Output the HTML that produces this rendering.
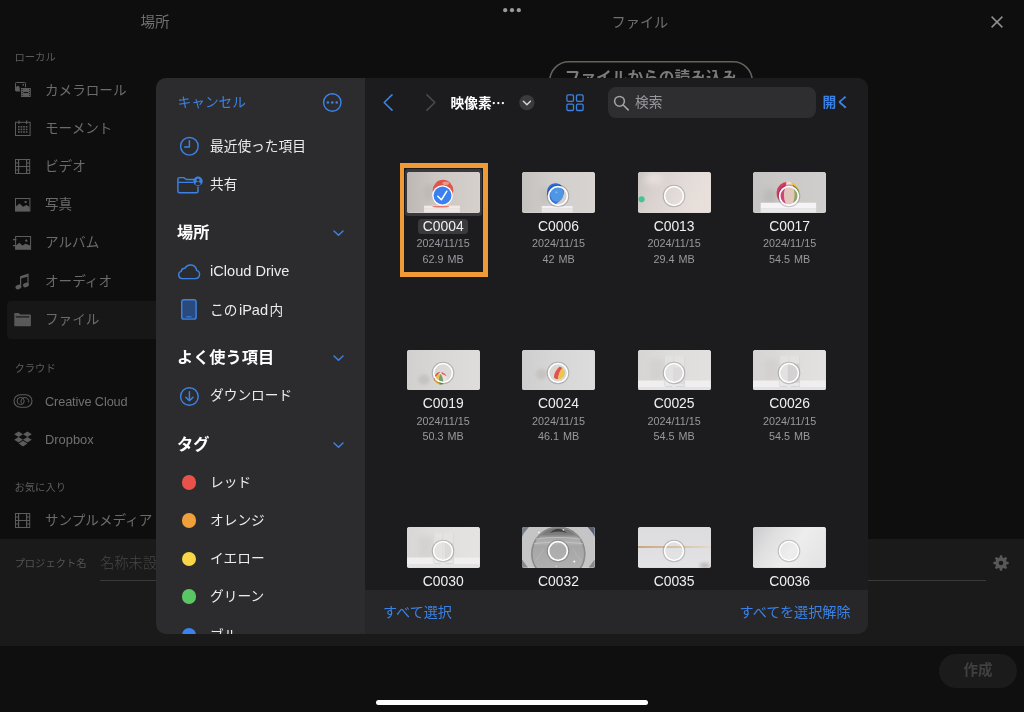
<!DOCTYPE html>
<html lang="ja">
<head>
<meta charset="utf-8">
<title>ファイル</title>
<style>
*{box-sizing:border-box;margin:0;padding:0}
html,body{width:1024px;height:712px;overflow:hidden;background:#0e0e0e}
body{position:relative;font-family:"Liberation Sans","Noto Sans CJK JP",sans-serif;color:#fff}
.abs{position:absolute}
.t{position:absolute;white-space:nowrap;line-height:1}
svg{position:absolute;overflow:visible}
#bg{position:absolute;left:0;top:0;width:1024px;height:712px;background:#0e0e0e;will-change:transform}
.hd{color:#6f6f6f;font-size:14.6px}
.sec{color:#5c5c5c;font-size:10.3px}
.it{color:#6b6b6b;font-size:13.6px}
#selrow{left:7px;top:300.5px;width:200px;height:38.5px;background:#171717;border-radius:4px}
#proj{left:0;top:539px;width:1024px;height:107px;background:#1a1a1a}
#foot{left:0;top:646px;width:1024px;height:66px;background:#0f0f0f}
#create{left:939px;top:653.5px;width:78px;height:34px;border-radius:17px;background:#1b1b1b;color:#404040;font-size:14.5px;font-weight:700;text-align:center;line-height:32px}
#home{left:376px;top:700px;width:272px;height:5px;border-radius:3px;background:#fff}
#imp{left:549px;top:61px;width:204px;height:40px;color:#7b7b7b;font-size:15.7px;font-weight:700;text-align:center;line-height:34px}
#modal{will-change:transform;left:156px;top:78px;width:712px;height:555.5px;border-radius:10px;overflow:hidden;background:#1c1c1e}
#side{left:0;top:0;width:209px;height:556px;background:#2c2c2e}
#main{left:209px;top:0;width:503px;height:556px;background:#1c1c1e}
.blue{color:#3b82e4}
.sl{font-size:13.7px;color:#ececec}
.sl b{font-weight:400;font-size:14.6px}
.sh{font-size:16.2px;font-weight:700;color:#fff}
.dot{position:absolute;width:14.6px;height:14.6px;border-radius:50%;left:25.9px}
#btm{left:0;top:511.5px;width:503px;height:44.5px;background:#272729}
#search{left:242.5px;top:9px;width:208px;height:31px;border-radius:8px;background:#2e2e31}
.th{position:absolute;width:73px;height:40.5px;border-radius:2.5px;overflow:hidden;background:#d9d6d3}
.th svg{left:0;top:0}
.nm{position:absolute;width:116px;text-align:center;font-size:13.9px;color:#f0f0f0;line-height:1;white-space:nowrap}
.mt{position:absolute;width:116px;text-align:center;font-size:10.8px;word-spacing:1px;color:#98989e;line-height:1;white-space:nowrap}
.ring{position:absolute;width:20.6px;height:20.6px;border-radius:50%;border:1.9px solid #fff;background:rgba(255,255,255,.13);box-shadow:0 0 1.5px rgba(0,0,0,.45),inset 0 0 1.5px rgba(0,0,0,.3)}
</style>
</head>
<body>
<div id="bg">
  <div class="t hd" style="left:140.5px;top:15px">場所</div>
  <div class="t hd" style="left:611.5px;top:15px;font-size:14.2px">ファイル</div>
  <svg style="left:502px;top:6px" width="20" height="8" viewBox="0 0 20 8"><circle cx="3.2" cy="4.2" r="2.1" fill="#9a9a9a"/><circle cx="10" cy="4.2" r="2.1" fill="#9a9a9a"/><circle cx="16.8" cy="4.2" r="2.1" fill="#9a9a9a"/></svg>
  <svg style="left:991px;top:16px" width="12" height="12" viewBox="0 0 12 12"><path d="M0.6 0.6L11.4 11.4M11.4 0.6L0.6 11.4" stroke="#8f8f8f" stroke-width="1.5" fill="none"/></svg>
  <svg style="left:549px;top:61px" width="204" height="40" viewBox="0 0 204 40"><rect x="0.75" y="0.75" width="202.5" height="38.5" rx="19.25" fill="none" stroke="#63635d" stroke-width="1.5"/></svg>
  <div class="abs" id="imp">ファイルからの読み込み</div>

  <div class="t sec" style="left:14.5px;top:53px">ローカル</div>
  <div class="abs" id="selrow"></div>

  <!-- camera roll -->
  <svg style="left:15px;top:82px" width="16" height="15" viewBox="0 0 16 15">
    <rect x="0.5" y="0.5" width="10" height="8.5" rx="0.8" fill="none" stroke="#5c5c5c" stroke-width="1"/>
    <path d="M0.5 9V5.5L2.8 3.6L4.8 5.6V9Z" fill="#5c5c5c"/><rect x="7.6" y="2" width="1.4" height="1.6" fill="#5c5c5c"/>
    <rect x="5.2" y="5.2" width="11.3" height="10.3" fill="#0e0e0e"/>
    <rect x="6" y="6" width="9.8" height="9" fill="#5c5c5c"/>
    <rect x="8.6" y="10" width="4.6" height="1" fill="#0e0e0e"/>
    <g fill="#0e0e0e" opacity=".75"><rect x="6.8" y="7" width="1" height="1"/><rect x="6.8" y="9" width="1" height="1"/><rect x="6.8" y="11" width="1" height="1"/><rect x="6.8" y="13" width="1" height="1"/><rect x="14" y="7" width="1" height="1"/><rect x="14" y="9" width="1" height="1"/><rect x="14" y="11" width="1" height="1"/><rect x="14" y="13" width="1" height="1"/></g>
  </svg>
  <div class="t it" style="left:45px;top:83.5px">カメラロール</div>

  <!-- calendar -->
  <svg style="left:15px;top:120px" width="16" height="16" viewBox="0 0 16 16">
    <rect x="0.5" y="2.3" width="14.6" height="13.2" fill="none" stroke="#5c5c5c" stroke-width="1"/>
    <path d="M4 0.5V4M11.6 0.5V4" stroke="#5c5c5c" stroke-width="1.2"/>
    <g fill="#5c5c5c"><rect x="3" y="6" width="1.6" height="1.6"/><rect x="5.6" y="6" width="1.6" height="1.6"/><rect x="8.2" y="6" width="1.6" height="1.6"/><rect x="10.8" y="6" width="1.6" height="1.6"/>
    <rect x="3" y="8.6" width="1.6" height="1.6"/><rect x="5.6" y="8.6" width="1.6" height="1.6"/><rect x="8.2" y="8.6" width="1.6" height="1.6"/><rect x="10.8" y="8.6" width="1.6" height="1.6"/>
    <rect x="3" y="11.2" width="1.6" height="1.6"/><rect x="5.6" y="11.2" width="1.6" height="1.6"/><rect x="8.2" y="11.2" width="1.6" height="1.6"/><rect x="10.8" y="11.2" width="1.6" height="1.6"/></g>
  </svg>
  <div class="t it" style="left:45px;top:121.5px">モーメント</div>

  <!-- film -->
  <svg style="left:15px;top:159px" width="16" height="15" viewBox="0 0 16 15">
    <rect x="0.5" y="0.5" width="14.2" height="14" fill="none" stroke="#5c5c5c" stroke-width="1"/>
    <path d="M3.6 0.5V14.5M11.6 0.5V14.5M3.6 7.5H11.6M0.5 4H3.6M0.5 7.5H3.6M0.5 11H3.6M11.6 4H14.7M11.6 7.5H14.7M11.6 11H14.7" stroke="#5c5c5c" stroke-width="1.15" fill="none"/>
  </svg>
  <div class="t it" style="left:45px;top:159.5px">ビデオ</div>

  <!-- photo -->
  <svg style="left:15px;top:198px" width="16" height="14" viewBox="0 0 16 14">
    <rect x="0.5" y="0.5" width="14.4" height="12.6" fill="none" stroke="#5c5c5c" stroke-width="1"/>
    <path d="M0.8 13V8.6L4.6 5.4L8 8.8L11.4 7L14.6 9V13Z" fill="#5c5c5c"/><rect x="9.6" y="3" width="2" height="2" rx="0.6" fill="#5c5c5c"/>
  </svg>
  <div class="t it" style="left:45px;top:197.5px">写真</div>

  <!-- album -->
  <svg style="left:13px;top:236px" width="18" height="14" viewBox="0 0 18 14">
    <rect x="2.6" y="0.5" width="15" height="12.8" fill="none" stroke="#5c5c5c" stroke-width="1"/>
    <path d="M0 3.6H3.4M0 9.6H3.4" stroke="#5c5c5c" stroke-width="1.1"/>
    <path d="M2.9 13V9.6L6.4 6.8L9.4 9.4L12.4 7.8L17.3 9.4V13Z" fill="#5c5c5c"/><rect x="12.2" y="3.6" width="2.2" height="2.2" rx="0.8" fill="#5c5c5c"/>
  </svg>
  <div class="t it" style="left:45px;top:236px">アルバム</div>

  <!-- audio -->
  <svg style="left:14.5px;top:272.5px" width="15" height="17" viewBox="0 0 15 17">
    <path d="M5 3.2L13.6 0.6V12.2H12.4V3.8L6.2 5.6V14H5Z" fill="#5c5c5c"/>
    <ellipse cx="3.4" cy="14" rx="3" ry="2.2" transform="rotate(-20 3.4 14)" fill="#5c5c5c"/>
    <ellipse cx="10.9" cy="12" rx="3" ry="2.2" transform="rotate(-20 10.9 12)" fill="#5c5c5c"/>
  </svg>
  <div class="t it" style="left:45px;top:274.5px">オーディオ</div>

  <!-- folder -->
  <svg style="left:14px;top:313px" width="17" height="14" viewBox="0 0 17 14">
    <path d="M0.3 0.6Q0.3 0 0.9 0H4.6L6.4 1.6H16.3Q16.9 1.6 16.9 2.2V12.6Q16.9 13.2 16.3 13.2H0.9Q0.3 13.2 0.3 12.6Z" fill="#595959"/>
    <rect x="1.8" y="3.3" width="13.4" height="1.2" fill="#171717"/>
  </svg>
  <div class="t it" style="left:45px;top:312.5px">ファイル</div>

  <div class="t sec" style="left:14.5px;top:363.5px">クラウド</div>
  <!-- creative cloud -->
  <svg style="left:14px;top:394px" width="18" height="14" viewBox="0 0 18 14">
    <path d="M6.2 0.8H11.8A6.2 6.2 0 0 1 11.8 13.2H6.2A6.2 6.2 0 0 1 6.2 0.8Z" fill="none" stroke="#5c5c5c" stroke-width="1.1"/>
    <circle cx="6.6" cy="7" r="3.6" fill="none" stroke="#5c5c5c" stroke-width="1"/>
    <path d="M7.6 9.6A3.9 3.9 0 1 1 14.6 8.4" fill="none" stroke="#5c5c5c" stroke-width="1"/>
  </svg>
  <div class="t it" style="left:45px;top:395.5px;font-size:12.7px;letter-spacing:-0.1px;color:#707070">Creative Cloud</div>
  <!-- dropbox -->
  <svg style="left:14px;top:431px" width="18" height="16" viewBox="0 0 18 16">
    <g fill="#5c5c5c"><path d="M4.6 0.4L9 3.2L4.6 6L0.2 3.2Z"/><path d="M13.4 0.4L17.8 3.2L13.4 6L9 3.2Z"/><path d="M4.6 6L9 8.8L4.6 11.6L0.2 8.8Z"/><path d="M13.4 6L17.8 8.8L13.4 11.6L9 8.8Z"/><path d="M4.6 12.6L9 9.8L13.4 12.6L9 15.4Z"/></g>
  </svg>
  <div class="t it" style="left:45px;top:433.5px;font-size:12.9px;color:#707070">Dropbox</div>

  <div class="t sec" style="left:14.5px;top:483px">お気に入り</div>
  <svg style="left:15px;top:513px" width="16" height="15" viewBox="0 0 16 15">
    <rect x="0.5" y="0.5" width="14.2" height="14" fill="none" stroke="#5c5c5c" stroke-width="1"/>
    <path d="M3.6 0.5V14.5M11.6 0.5V14.5M3.6 7.5H11.6M0.5 4H3.6M0.5 7.5H3.6M0.5 11H3.6M11.6 4H14.7M11.6 7.5H14.7M11.6 11H14.7" stroke="#5c5c5c" stroke-width="1.15" fill="none"/>
  </svg>
  <div class="t it" style="left:45px;top:513.5px">サンプルメディア</div>

  <div class="abs" id="proj"></div>
  <div class="t sec" style="left:14.5px;top:559px;color:#545454">プロジェクト名</div>
  <div class="t" style="left:100px;top:556px;font-size:14.3px;font-weight:300;color:#464646">名称未設定</div>
  <div class="abs" style="left:100px;top:580px;width:886px;height:1px;background:#3a3a3a"></div>
  <!-- gear -->
  <svg style="left:993.4px;top:555.2px" width="16" height="16" viewBox="0 0 16 16">
    <g fill="#585858"><circle cx="8" cy="8" r="5.8"/>
    <g id="gt"><rect x="6.7" y="0.3" width="2.6" height="3.4" rx="0.7"/></g>
    <rect x="6.7" y="0.3" width="2.6" height="3.4" rx="0.7" transform="rotate(45 8 8)"/>
    <rect x="6.7" y="0.3" width="2.6" height="3.4" rx="0.7" transform="rotate(90 8 8)"/>
    <rect x="6.7" y="0.3" width="2.6" height="3.4" rx="0.7" transform="rotate(135 8 8)"/>
    <rect x="6.7" y="0.3" width="2.6" height="3.4" rx="0.7" transform="rotate(180 8 8)"/>
    <rect x="6.7" y="0.3" width="2.6" height="3.4" rx="0.7" transform="rotate(225 8 8)"/>
    <rect x="6.7" y="0.3" width="2.6" height="3.4" rx="0.7" transform="rotate(270 8 8)"/>
    <rect x="6.7" y="0.3" width="2.6" height="3.4" rx="0.7" transform="rotate(315 8 8)"/></g>
    <circle cx="8" cy="8" r="2.3" fill="#1a1a1a"/>
  </svg>
  <div class="abs" id="foot"></div>
  <div class="abs" id="create">作成</div>
  <div class="abs" id="home"></div>
</div>
<div class="abs" id="modal">
  <div class="abs" id="side">
    <div class="t blue" style="left:21.5px;top:17.5px;font-size:13.7px">キャンセル</div>
    <!-- ellipsis circle -->
    <svg style="left:166px;top:14px" width="21" height="21" viewBox="0 0 21 21">
      <circle cx="10.3" cy="10.5" r="8.7" fill="none" stroke="#3b82e4" stroke-width="1.45"/>
      <circle cx="5.9" cy="10.5" r="1.3" fill="#3b82e4"/><circle cx="10.3" cy="10.5" r="1.3" fill="#3b82e4"/><circle cx="14.7" cy="10.5" r="1.3" fill="#3b82e4"/>
    </svg>
    <!-- clock -->
    <svg style="left:22.5px;top:57.5px" width="21" height="21" viewBox="0 0 21 21">
      <circle cx="10.4" cy="10.3" r="8.8" fill="none" stroke="#3b82e4" stroke-width="1.45"/>
      <path d="M10.4 4.6V11H5.6" fill="none" stroke="#3b82e4" stroke-width="1.45" stroke-linecap="round" stroke-linejoin="round"/>
    </svg>
    <div class="t sl" style="left:54px;top:61.5px">最近使った項目</div>
    <!-- shared folder -->
    <svg style="left:20.5px;top:98px" width="27" height="18" viewBox="0 0 27 18">
      <path d="M0.9 3.2Q0.9 1.6 2.5 1.6H6.6Q7.4 1.6 7.9 2.2L8.6 3Q9 3.4 9.7 3.4H17" fill="none" stroke="#3b82e4" stroke-width="1.45"/>
      <path d="M0.9 3V15Q0.9 16.8 2.7 16.8H19.2Q21 16.8 21 15V10.4" fill="none" stroke="#3b82e4" stroke-width="1.45"/>
      <path d="M0.9 6.4H16.4" fill="none" stroke="#3b82e4" stroke-width="1.2"/>
      <circle cx="21" cy="5.2" r="4.7" fill="#3b82e4"/>
      <circle cx="21" cy="3.9" r="1.5" fill="#2c2c2e"/>
      <path d="M18.1 8.2Q18.4 6.1 21 6.1Q23.6 6.1 23.9 8.2Q22.6 9.3 21 9.3Q19.4 9.3 18.1 8.2Z" fill="#2c2c2e"/>
    </svg>
    <div class="t sl" style="left:54px;top:99.5px">共有</div>

    <div class="t sh" style="left:21px;top:145.5px">場所</div>
    <svg style="left:176.5px;top:151.5px" width="11" height="7" viewBox="0 0 11 7"><path d="M1 1L5.5 5.3L10 1" fill="none" stroke="#3b82e4" stroke-width="1.5" stroke-linecap="round" stroke-linejoin="round"/></svg>
    <!-- cloud -->
    <svg style="left:21px;top:184.5px" width="24" height="17" viewBox="0 0 24 17">
      <path d="M5.6 15.6H18.6A4.2 4.2 0 0 0 19.6 7.4A6.2 6.2 0 0 0 8 5.2A3.6 3.6 0 0 0 4.2 8.4A3.7 3.7 0 0 0 5.6 15.6Z" fill="none" stroke="#3b82e4" stroke-width="1.45" stroke-linejoin="round"/>
    </svg>
    <div class="t sl" style="left:54px;top:186px"><b>iCloud Drive</b></div>
    <!-- ipad -->
    <svg style="left:25px;top:221px" width="16" height="21" viewBox="0 0 16 21">
      <rect x="0.7" y="0.7" width="14.4" height="19.4" rx="2.2" fill="#2b4a7c" stroke="#3b82e4" stroke-width="1.45"/>
      <path d="M5.6 17.8H10.2" stroke="#3b82e4" stroke-width="1" stroke-linecap="round"/>
    </svg>
    <div class="t sl" style="left:54px;top:224.5px">この<b style="margin:0 1.5px">iPad</b>内</div>

    <div class="t sh" style="left:21px;top:270.5px">よく使う項目</div>
    <svg style="left:176.5px;top:276.5px" width="11" height="7" viewBox="0 0 11 7"><path d="M1 1L5.5 5.3L10 1" fill="none" stroke="#3b82e4" stroke-width="1.5" stroke-linecap="round" stroke-linejoin="round"/></svg>
    <!-- download -->
    <svg style="left:22.5px;top:307.5px" width="21" height="21" viewBox="0 0 21 21">
      <circle cx="10.4" cy="10.5" r="8.8" fill="none" stroke="#3b82e4" stroke-width="1.45"/>
      <path d="M10.4 5.6V14.6M6.8 11.2L10.4 14.8L14 11.2" fill="none" stroke="#3b82e4" stroke-width="1.45" stroke-linecap="round" stroke-linejoin="round"/>
    </svg>
    <div class="t sl" style="left:54px;top:311px">ダウンロード</div>

    <div class="t sh" style="left:21px;top:357.5px">タグ</div>
    <svg style="left:176.5px;top:363.5px" width="11" height="7" viewBox="0 0 11 7"><path d="M1 1L5.5 5.3L10 1" fill="none" stroke="#3b82e4" stroke-width="1.5" stroke-linecap="round" stroke-linejoin="round"/></svg>

    <div class="dot" style="top:397.4px;background:#e8524a"></div>
    <div class="t sl" style="left:54px;top:397.5px">レッド</div>
    <div class="dot" style="top:435.3px;background:#f0a03a"></div>
    <div class="t sl" style="left:54px;top:435.5px">オレンジ</div>
    <div class="dot" style="top:473.5px;background:#f8d648"></div>
    <div class="t sl" style="left:54px;top:474px">イエロー</div>
    <div class="dot" style="top:511.4px;background:#5ac764"></div>
    <div class="t sl" style="left:54px;top:512px">グリーン</div>
    <div class="dot" style="top:550.2px;background:#3b82f0"></div>
    <div class="t sl" style="left:54px;top:551px">ブルー</div>
  </div>
  <div class="abs" id="main">
    <!-- back / forward -->
    <svg style="left:18px;top:16px" width="10" height="17" viewBox="0 0 10 17"><path d="M9 0.9L1.2 8.5L9 16.1" fill="none" stroke="#3b82e4" stroke-width="1.6" stroke-linecap="round" stroke-linejoin="round"/></svg>
    <svg style="left:60.5px;top:16px" width="10" height="17" viewBox="0 0 10 17"><path d="M1 0.9L8.8 8.5L1 16.1" fill="none" stroke="#4a4a4c" stroke-width="1.6" stroke-linecap="round" stroke-linejoin="round"/></svg>
    <div class="t" style="left:85.5px;top:17.5px;font-size:13.7px;font-weight:700;color:#fff">映像素<span style="font-family:'Noto Sans CJK JP',sans-serif">…</span></div>
    <!-- dropdown -->
    <svg style="left:154px;top:17px" width="16" height="16" viewBox="0 0 16 16"><circle cx="7.9" cy="7.7" r="7.6" fill="#3a3a3c"/><path d="M4.4 6.2L7.9 9.7L11.4 6.2" fill="none" stroke="#d2d2d6" stroke-width="1.5" stroke-linecap="round" stroke-linejoin="round"/></svg>
    <!-- grid -->
    <svg style="left:201px;top:16px" width="18" height="18" viewBox="0 0 18 18">
      <g fill="none" stroke="#3b82e4" stroke-width="1.3"><rect x="0.9" y="0.9" width="6.6" height="6.4" rx="1.2"/><rect x="10.5" y="0.9" width="6.6" height="6.4" rx="1.2"/><rect x="0.9" y="10.1" width="6.6" height="6.4" rx="1.2"/><rect x="10.5" y="10.1" width="6.6" height="6.4" rx="1.2"/></g>
    </svg>
    <div class="abs" id="search"></div>
    <svg style="left:248px;top:17px" width="16" height="16" viewBox="0 0 16 16"><circle cx="6.5" cy="6.3" r="4.9" fill="none" stroke="#a2a2a8" stroke-width="1.5"/><path d="M10.2 10L15.2 14.9" stroke="#a2a2a8" stroke-width="1.6" stroke-linecap="round"/></svg>
    <div class="t" style="left:270px;top:17.5px;font-size:13.7px;color:#98989e">検索</div>
    <div class="t blue" style="left:457.5px;top:17.5px;font-size:13.7px;font-weight:700">開く</div>
    <div class="abs" style="left:34.7px;top:84.9px;width:88.1px;height:113.9px;background:#f09a37"></div>
    <div class="abs" style="left:39.4px;top:89.9px;width:78.4px;height:104px;background:#1c1c1e"></div>
    <div class="abs" style="left:39.8px;top:90.8px;width:77.6px;height:47px;border-radius:3px;background:#39393d"></div>
    <div class="abs" style="left:53.2px;top:141.2px;width:49.6px;height:15px;border-radius:3.5px;background:#3a3a3c"></div>
    <div class="th" style="left:41.9px;top:94.1px"><svg width="72.6" height="40.5" viewBox="0 0 73 41" preserveAspectRatio="none"><defs><linearGradient id="g1" x1="0" y1="0" x2="1" y2="0"><stop offset="0" stop-color="#beb8b4"/><stop offset="0.4" stop-color="#cdc7c3"/><stop offset="1" stop-color="#d5d0cc"/></linearGradient><filter id="bl1" x="-50%" y="-50%" width="200%" height="200%"><feGaussianBlur stdDeviation="2.2"/></filter><filter id="bl1b" x="-50%" y="-50%" width="200%" height="200%"><feGaussianBlur stdDeviation="0.45"/></filter></defs><rect width="73" height="41" fill="url(#g1)"/><ellipse cx="22" cy="21" rx="6" ry="9" fill="#b9b3af" opacity=".55" filter="url(#bl1)"/><rect x="17.2" y="34.1" width="36" height="2.7" fill="#f3e9e7"/><rect x="17.2" y="36.7" width="36" height="4.4" fill="#ebe7e5"/><ellipse cx="34" cy="35.1" rx="8.6" ry="0.8" fill="#dc5a50" opacity=".8"/><g filter="url(#bl1b)"><ellipse cx="36.2" cy="19" rx="10.4" ry="11.2" fill="#dc564c"/><ellipse cx="39" cy="11.4" rx="3.4" ry="1.8" fill="#f39a92" opacity=".9"/></g></svg></div>
    <svg style="left:67.3px;top:107.3px" width="21" height="21" viewBox="0 0 21 21"><circle cx="10.5" cy="10.5" r="10.3" fill="#fff"/><circle cx="10.5" cy="10.5" r="9" fill="#3a80f0"/><path d="M5.8 11.3L9.4 14.8L14.8 6.2" fill="none" stroke="#fff" stroke-width="1.5" stroke-linecap="round" stroke-linejoin="round"/></svg>
    <div class="nm" style="left:20.2px;top:142.0px">C0004</div>
    <div class="mt" style="left:20.2px;top:160.4px">2024/11/15</div>
    <div class="mt" style="left:20.2px;top:176.0px">62.9 MB</div>
    <div class="th" style="left:157.2px;top:94.1px"><svg width="72.6" height="40.5" viewBox="0 0 73 41" preserveAspectRatio="none"><defs><linearGradient id="g2" x1="0" y1="0" x2="1" y2="0"><stop offset="0" stop-color="#c4c1bf"/><stop offset="0.45" stop-color="#d1cecc"/><stop offset="1" stop-color="#d7d4d2"/></linearGradient><filter id="bl2" x="-50%" y="-50%" width="200%" height="200%"><feGaussianBlur stdDeviation="2.2"/></filter><filter id="bl2b" x="-50%" y="-50%" width="200%" height="200%"><feGaussianBlur stdDeviation="0.4"/></filter></defs><rect width="73" height="41" fill="url(#g2)"/><ellipse cx="23" cy="24" rx="5" ry="8" fill="#bdb9b6" opacity=".5" filter="url(#bl2)"/><rect x="19.9" y="34.4" width="31" height="2.4" fill="#f1eff1"/><rect x="19.9" y="36.7" width="31" height="4.4" fill="#e7e5e5"/><g filter="url(#bl2b)"><path d="M33.7 11.4C39 11.4 42.4 15.6 42.2 20.6C42 25.6 38 30 34.6 32.2L33.8 33L33 32.2C29 30 25.2 26 25.2 20.6C25.2 15.6 28.6 11.4 33.7 11.4Z" fill="#2f68d8"/><ellipse cx="35" cy="22" rx="6.6" ry="8.2" fill="#4590e2"/><circle cx="34.6" cy="20.6" r="1.2" fill="#7ab8f0" opacity=".8"/></g></svg></div>
    <svg style="left:182.1px;top:106.7px" width="22" height="22" viewBox="0 0 22 22"><circle cx="11" cy="11" r="9.9" fill="none" stroke="#000" stroke-opacity=".18" stroke-width="2.9"/><circle cx="11" cy="11" r="9.35" fill="#fff" fill-opacity=".06" stroke="#fff" stroke-width="1.75"/></svg>
    <div class="nm" style="left:135.5px;top:142.0px">C0006</div>
    <div class="mt" style="left:135.5px;top:160.4px">2024/11/15</div>
    <div class="mt" style="left:135.5px;top:176.0px">42 MB</div>
    <div class="th" style="left:272.8px;top:94.1px"><svg width="72.6" height="40.5" viewBox="0 0 73 41" preserveAspectRatio="none"><defs><linearGradient id="g3" x1="0" y1="0" x2="1" y2="0.25"><stop offset="0" stop-color="#c7c3c0"/><stop offset="0.3" stop-color="#d8d1cd"/><stop offset="0.7" stop-color="#e3dbd7"/><stop offset="1" stop-color="#e9e0dc"/></linearGradient><filter id="bl3" x="-50%" y="-50%" width="200%" height="200%"><feGaussianBlur stdDeviation="4"/></filter></defs><rect width="73" height="41" fill="url(#g3)"/><ellipse cx="16" cy="7" rx="10" ry="6" fill="#ebe4e1" opacity=".8" filter="url(#bl3)"/><circle cx="3.6" cy="27.7" r="3.1" fill="#42c690"/></svg></div>
    <svg style="left:297.7px;top:106.7px" width="22" height="22" viewBox="0 0 22 22"><circle cx="11" cy="11" r="9.9" fill="none" stroke="#000" stroke-opacity=".18" stroke-width="2.9"/><circle cx="11" cy="11" r="9.35" fill="#fff" fill-opacity=".06" stroke="#fff" stroke-width="1.75"/></svg>
    <div class="nm" style="left:251.1px;top:142.0px">C0013</div>
    <div class="mt" style="left:251.1px;top:160.4px">2024/11/15</div>
    <div class="mt" style="left:251.1px;top:176.0px">29.4 MB</div>
    <div class="th" style="left:388.3px;top:94.1px"><svg width="72.6" height="40.5" viewBox="0 0 73 41" preserveAspectRatio="none"><defs><linearGradient id="g4" x1="0" y1="0" x2="1" y2="0"><stop offset="0" stop-color="#c6c5c3"/><stop offset="0.5" stop-color="#cbcac8"/><stop offset="1" stop-color="#cfcecc"/></linearGradient><filter id="bl4" x="-50%" y="-50%" width="200%" height="200%"><feGaussianBlur stdDeviation="3"/></filter><filter id="bl4b" x="-50%" y="-50%" width="200%" height="200%"><feGaussianBlur stdDeviation="0.4"/></filter></defs><rect width="73" height="41" fill="url(#g4)"/><ellipse cx="17" cy="25" rx="7" ry="8" fill="#b2b1af" opacity=".6" filter="url(#bl4)"/><rect x="7.7" y="31.1" width="55.8" height="5.7" fill="#f5f3f5"/><rect x="7.7" y="36.7" width="55.8" height="4.4" fill="#eae8ea"/><g filter="url(#bl4b)"><circle cx="35" cy="21.3" r="11.3" fill="#e2c3ba"/><path d="M33 10.2A11.3 11.3 0 0 0 29.6 31.2Q22 21 33 10.2Z" fill="#e6b335"/><path d="M34.6 10A11.3 11.3 0 0 0 32 32.2Q25 21 34.6 10Z" fill="#cf3a70"/><path d="M34.6 10Q28.4 21 33 32.4Q31 32.2 30.4 31.6Q25.6 21 32.4 10.6Z" fill="#cf3a70"/><path d="M39.6 12.6Q43.6 22 40.4 31.2A11.3 11.3 0 0 0 46.3 21.3A11.3 11.3 0 0 0 44.6 15.4Q42.4 13.2 39.6 12.6Z" fill="#86a05c"/><path d="M37 10.2A11.3 11.3 0 0 1 46.2 19.6Q43 13.6 38.4 12.2Z" fill="#f0c236"/><path d="M33.6 10.1Q36 9.6 38.6 10.6L39 12.4Q36 11.6 33.4 12.6Z" fill="#f2dcd6"/></g></svg></div>
    <svg style="left:413.2px;top:106.7px" width="22" height="22" viewBox="0 0 22 22"><circle cx="11" cy="11" r="9.9" fill="none" stroke="#000" stroke-opacity=".18" stroke-width="2.9"/><circle cx="11" cy="11" r="9.35" fill="#fff" fill-opacity=".06" stroke="#fff" stroke-width="1.75"/></svg>
    <div class="nm" style="left:366.6px;top:142.0px">C0017</div>
    <div class="mt" style="left:366.6px;top:160.4px">2024/11/15</div>
    <div class="mt" style="left:366.6px;top:176.0px">54.5 MB</div>
    <div class="th" style="left:41.9px;top:271.5px"><svg width="72.6" height="40.5" viewBox="0 0 73 41" preserveAspectRatio="none"><defs><linearGradient id="g5" x1="0" y1="0" x2="1" y2="0"><stop offset="0" stop-color="#d1d0cf"/><stop offset="0.5" stop-color="#d9d8d7"/><stop offset="1" stop-color="#dedddc"/></linearGradient><filter id="bl5" x="-50%" y="-50%" width="200%" height="200%"><feGaussianBlur stdDeviation="1.8"/></filter><filter id="bl5b" x="-50%" y="-50%" width="200%" height="200%"><feGaussianBlur stdDeviation="0.35"/></filter></defs><rect width="73" height="41" fill="url(#g5)"/><ellipse cx="17" cy="30" rx="5.5" ry="5.2" fill="#b8b1ad" opacity=".5" filter="url(#bl5)"/><g filter="url(#bl5b)"><circle cx="33.8" cy="28.7" r="6.4" fill="#f2dfe0"/><path d="M33.8 22.3A6.4 6.4 0 0 0 28.6 32.4Q28.6 26 33.8 22.3Z" fill="#dc4640"/><path d="M28.2 27.6Q27 31.6 30.4 34.2Q31.8 35 32.8 35.1Q31 28 33 24Q29.6 25 28.2 27.6Z" fill="#ecb83a"/><path d="M33.6 23.6Q31 29 32.8 35.1Q35 35.3 36.6 34.4Q36.6 28 33.6 23.6Z" fill="#6c9c5c"/><path d="M33.8 22.3Q38 22.6 39.8 26.6Q37 24.4 34.6 24.2Z" fill="#e0505a"/><circle cx="34" cy="23.6" r="0.9" fill="#f6eeee"/></g></svg></div>
    <svg style="left:66.8px;top:284.1px" width="22" height="22" viewBox="0 0 22 22"><circle cx="11" cy="11" r="9.9" fill="none" stroke="#000" stroke-opacity=".18" stroke-width="2.9"/><circle cx="11" cy="11" r="9.35" fill="#fff" fill-opacity=".06" stroke="#fff" stroke-width="1.75"/></svg>
    <div class="nm" style="left:20.2px;top:319.4px">C0019</div>
    <div class="mt" style="left:20.2px;top:337.8px">2024/11/15</div>
    <div class="mt" style="left:20.2px;top:353.4px">50.3 MB</div>
    <div class="th" style="left:157.2px;top:271.5px"><svg width="72.6" height="40.5" viewBox="0 0 73 41" preserveAspectRatio="none"><defs><linearGradient id="g6" x1="0" y1="0" x2="1" y2="0"><stop offset="0" stop-color="#cfcece"/><stop offset="0.5" stop-color="#d8d7d7"/><stop offset="1" stop-color="#dddcdc"/></linearGradient><filter id="bl6" x="-50%" y="-50%" width="200%" height="200%"><feGaussianBlur stdDeviation="1.8"/></filter><filter id="bl6b" x="-50%" y="-50%" width="200%" height="200%"><feGaussianBlur stdDeviation="0.35"/></filter></defs><rect width="73" height="41" fill="url(#g6)"/><ellipse cx="19.5" cy="24.5" rx="5.6" ry="5.6" fill="#bcb3b0" opacity=".5" filter="url(#bl6)"/><g filter="url(#bl6b)"><circle cx="36.5" cy="23.2" r="6.4" fill="#dcd3cb"/><path d="M37.6 16.9Q32 22 32.2 28Q34 29.6 36.4 29.6Q36.4 23 40.6 18.2Q39 17 37.6 16.9Z" fill="#df4a42"/><path d="M40.6 18.2Q36.4 23 36.4 29.6Q40 29.8 42 26.8Q43.6 23.6 42.2 20.2Q41.6 19 40.6 18.2Z" fill="#f0c242"/><path d="M42.2 20.2Q43.4 23.6 42 26.8Q43.2 24.6 42.8 22Z" fill="#7aa060"/></g></svg></div>
    <svg style="left:182.1px;top:284.1px" width="22" height="22" viewBox="0 0 22 22"><circle cx="11" cy="11" r="9.9" fill="none" stroke="#000" stroke-opacity=".18" stroke-width="2.9"/><circle cx="11" cy="11" r="9.35" fill="#fff" fill-opacity=".06" stroke="#fff" stroke-width="1.75"/></svg>
    <div class="nm" style="left:135.5px;top:319.4px">C0024</div>
    <div class="mt" style="left:135.5px;top:337.8px">2024/11/15</div>
    <div class="mt" style="left:135.5px;top:353.4px">46.1 MB</div>
    <div class="th" style="left:272.8px;top:271.5px"><svg width="72.6" height="40.5" viewBox="0 0 73 41" preserveAspectRatio="none"><defs><linearGradient id="g7" x1="0" y1="0" x2="1" y2="0"><stop offset="0" stop-color="#d7d5d4"/><stop offset="0.4" stop-color="#dddcdb"/><stop offset="1" stop-color="#e2e1e0"/></linearGradient><filter id="blg7" x="-50%" y="-50%" width="200%" height="200%"><feGaussianBlur stdDeviation="2.5"/></filter></defs><rect width="73" height="41" fill="url(#g7)"/><rect x="12" y="10" width="14" height="21" fill="#c9c5c4" opacity=".4" filter="url(#blg7)"/><rect x="0" y="30.9" width="73" height="6.8" fill="#f0eeef"/><rect x="0" y="37.5" width="73" height="3.6" fill="#e3e2e4"/><rect x="26.4" y="5.9" width="20.6" height="30.8" fill="#e6e4e4" opacity=".6"/><path d="M26.6 6V36.6M46.8 6V36.6M36 6V36.6" stroke="#d2d0d0" stroke-width="0.7" opacity=".7"/><rect x="36" y="17.6" width="11" height="17" fill="#d4d2d2" opacity=".6"/><path d="M27.4 36.9H34.6M37.8 36.9H47" stroke="#cfcdce" stroke-width="0.8"/></svg></div>
    <svg style="left:297.7px;top:284.1px" width="22" height="22" viewBox="0 0 22 22"><circle cx="11" cy="11" r="9.9" fill="none" stroke="#000" stroke-opacity=".18" stroke-width="2.9"/><circle cx="11" cy="11" r="9.35" fill="#fff" fill-opacity=".06" stroke="#fff" stroke-width="1.75"/></svg>
    <div class="nm" style="left:251.1px;top:319.4px">C0025</div>
    <div class="mt" style="left:251.1px;top:337.8px">2024/11/15</div>
    <div class="mt" style="left:251.1px;top:353.4px">54.5 MB</div>
    <div class="th" style="left:388.3px;top:271.5px"><svg width="72.6" height="40.5" viewBox="0 0 73 41" preserveAspectRatio="none"><defs><linearGradient id="g8" x1="0" y1="0" x2="1" y2="0"><stop offset="0" stop-color="#d6d4d3"/><stop offset="0.4" stop-color="#dcdbda"/><stop offset="1" stop-color="#e3e2e1"/></linearGradient><filter id="blg8" x="-50%" y="-50%" width="200%" height="200%"><feGaussianBlur stdDeviation="2.5"/></filter></defs><rect width="73" height="41" fill="url(#g8)"/><rect x="12" y="10" width="14" height="21" fill="#c9c5c4" opacity=".4" filter="url(#blg8)"/><rect x="0" y="30.9" width="73" height="6.8" fill="#f0eeef"/><rect x="0" y="37.5" width="73" height="3.6" fill="#e3e2e4"/><rect x="26.4" y="5.9" width="20.6" height="30.8" fill="#e6e4e4" opacity=".6"/><path d="M26.6 6V36.6M46.8 6V36.6M36 6V36.6" stroke="#d2d0d0" stroke-width="0.7" opacity=".7"/><rect x="35" y="14" width="11.8" height="19" fill="#cbc9c9" opacity=".7"/><path d="M27.4 36.9H34.6M37.8 36.9H47" stroke="#cfcdce" stroke-width="0.8"/></svg></div>
    <svg style="left:413.2px;top:284.1px" width="22" height="22" viewBox="0 0 22 22"><circle cx="11" cy="11" r="9.9" fill="none" stroke="#000" stroke-opacity=".18" stroke-width="2.9"/><circle cx="11" cy="11" r="9.35" fill="#fff" fill-opacity=".06" stroke="#fff" stroke-width="1.75"/></svg>
    <div class="nm" style="left:366.6px;top:319.4px">C0026</div>
    <div class="mt" style="left:366.6px;top:337.8px">2024/11/15</div>
    <div class="mt" style="left:366.6px;top:353.4px">54.5 MB</div>
    <div class="th" style="left:41.9px;top:449.0px"><svg width="72.6" height="40.5" viewBox="0 0 73 41" preserveAspectRatio="none"><defs><linearGradient id="g9" x1="0" y1="0" x2="1" y2="0"><stop offset="0" stop-color="#d9d7d6"/><stop offset="0.4" stop-color="#dfdedd"/><stop offset="1" stop-color="#e5e4e3"/></linearGradient><filter id="blg9" x="-50%" y="-50%" width="200%" height="200%"><feGaussianBlur stdDeviation="2.5"/></filter></defs><rect width="73" height="41" fill="url(#g9)"/><rect x="12" y="10" width="14" height="21" fill="#c9c5c4" opacity=".4" filter="url(#blg9)"/><rect x="0" y="30.9" width="73" height="6.8" fill="#f0eeef"/><rect x="0" y="37.5" width="73" height="3.6" fill="#e3e2e4"/><rect x="26.4" y="5.9" width="20.6" height="30.8" fill="#e6e4e4" opacity=".6"/><path d="M26.6 6V36.6M46.8 6V36.6M36 6V36.6" stroke="#d2d0d0" stroke-width="0.7" opacity=".7"/><rect x="38" y="16" width="8.8" height="18" fill="#d3d1d1" opacity=".6"/><path d="M27.4 36.9H34.6M37.8 36.9H47" stroke="#cfcdce" stroke-width="0.8"/></svg></div>
    <svg style="left:66.8px;top:461.6px" width="22" height="22" viewBox="0 0 22 22"><circle cx="11" cy="11" r="9.9" fill="none" stroke="#000" stroke-opacity=".18" stroke-width="2.9"/><circle cx="11" cy="11" r="9.35" fill="#fff" fill-opacity=".06" stroke="#fff" stroke-width="1.75"/></svg>
    <div class="nm" style="left:20.2px;top:496.9px">C0030</div>
    <div class="th" style="left:157.2px;top:449.0px"><svg width="72.6" height="40.5" viewBox="0 0 73 41" preserveAspectRatio="none"><defs><linearGradient id="g10" x1="0" y1="0" x2="0" y2="1"><stop offset="0" stop-color="#6a6a6b"/><stop offset="0.14" stop-color="#7d7d7e"/><stop offset="0.2" stop-color="#a3a3a4"/><stop offset="0.3" stop-color="#b3b3b4"/><stop offset="0.36" stop-color="#a6a6a7"/><stop offset="1" stop-color="#b6b6b7"/></linearGradient><filter id="bl10" x="-50%" y="-50%" width="200%" height="200%"><feGaussianBlur stdDeviation="0.5"/></filter></defs><rect width="73" height="41" fill="#c5c5c6"/><g filter="url(#bl10)"><path d="M0 0H7L2 6L0 10Z" fill="#7a7e88"/><path d="M73 0H66L71 6L73 10Z" fill="#5a6074"/><path d="M0 33L6 41H0Z" fill="#8a8a8b"/><path d="M73 33L67 41H73Z" fill="#8a8a8b"/><circle cx="36.5" cy="27" r="27.2" fill="url(#g10)"/><circle cx="36.5" cy="27" r="26.6" fill="none" stroke="#8b8b8c" stroke-width="1.6"/><path d="M14 12.2Q36.5 9 59 12.2" fill="none" stroke="#bebebf" stroke-width="1"/><path d="M12 17Q36.5 13.4 61 17" fill="none" stroke="#c0c0c1" stroke-width="1.1"/><path d="M28 6Q36.5 -2 45 6Q36.5 3.2 28 6Z" fill="#3c3c3e"/><path d="M22 22L14 34M51 22L59 34" stroke="#bcbcbd" stroke-width="1" opacity=".6"/><circle cx="17" cy="5.4" r="0.9" fill="#f4f4f4"/><circle cx="52.6" cy="35" r="1.1" fill="#f4f4f4"/><circle cx="34.4" cy="39.6" r="0.7" fill="#f0f0f0"/><circle cx="41.6" cy="2.8" r="0.9" fill="#cfe0ea"/></g></svg></div>
    <svg style="left:182.1px;top:461.6px" width="22" height="22" viewBox="0 0 22 22"><circle cx="11" cy="11" r="9.9" fill="none" stroke="#000" stroke-opacity=".18" stroke-width="2.9"/><circle cx="11" cy="11" r="9.35" fill="#fff" fill-opacity=".06" stroke="#fff" stroke-width="1.75"/></svg>
    <div class="nm" style="left:135.5px;top:496.9px">C0032</div>
    <div class="th" style="left:272.8px;top:449.0px"><svg width="72.6" height="40.5" viewBox="0 0 73 41" preserveAspectRatio="none"><defs><linearGradient id="g11" x1="0" y1="0" x2="0" y2="1"><stop offset="0" stop-color="#dcdbde"/><stop offset="1" stop-color="#e3e2e5"/></linearGradient><linearGradient id="g11b" x1="0" y1="0" x2="1" y2="0"><stop offset="0" stop-color="#c49e72"/><stop offset="0.45" stop-color="#d3b590"/><stop offset="1" stop-color="#e6d8c2"/></linearGradient><filter id="bl11" x="-50%" y="-50%" width="200%" height="200%"><feGaussianBlur stdDeviation="1.6"/></filter></defs><rect width="73" height="41" fill="url(#g11)"/><rect x="0" y="19.4" width="73" height="1.7" fill="url(#g11b)"/><ellipse cx="67" cy="39" rx="5" ry="3" fill="#aaa098" opacity=".55" filter="url(#bl11)"/></svg></div>
    <svg style="left:297.7px;top:461.6px" width="22" height="22" viewBox="0 0 22 22"><circle cx="11" cy="11" r="9.9" fill="none" stroke="#000" stroke-opacity=".18" stroke-width="2.9"/><circle cx="11" cy="11" r="9.35" fill="#fff" fill-opacity=".06" stroke="#fff" stroke-width="1.75"/></svg>
    <div class="nm" style="left:251.1px;top:496.9px">C0035</div>
    <div class="th" style="left:388.3px;top:449.0px"><svg width="72.6" height="40.5" viewBox="0 0 73 41" preserveAspectRatio="none"><defs><linearGradient id="g12" x1="0" y1="0.2" x2="1" y2="0.6"><stop offset="0" stop-color="#cfced0"/><stop offset="0.25" stop-color="#e0dfe0"/><stop offset="0.6" stop-color="#eeedee"/><stop offset="1" stop-color="#e6e5e6"/></linearGradient></defs><rect width="73" height="41" fill="url(#g12)"/></svg></div>
    <svg style="left:413.2px;top:461.6px" width="22" height="22" viewBox="0 0 22 22"><circle cx="11" cy="11" r="9.9" fill="none" stroke="#000" stroke-opacity=".18" stroke-width="2.9"/><circle cx="11" cy="11" r="9.35" fill="#fff" fill-opacity=".06" stroke="#fff" stroke-width="1.75"/></svg>
    <div class="nm" style="left:366.6px;top:496.9px">C0036</div>
    <div class="abs" id="btm"></div>
    <div class="t blue" style="left:18px;top:527px;font-size:14.1px">すべて選択</div>
    <div class="t blue" style="right:17.5px;top:527px;font-size:14.1px">すべてを選択解除</div>
  </div>
</div>
</body>
</html>
